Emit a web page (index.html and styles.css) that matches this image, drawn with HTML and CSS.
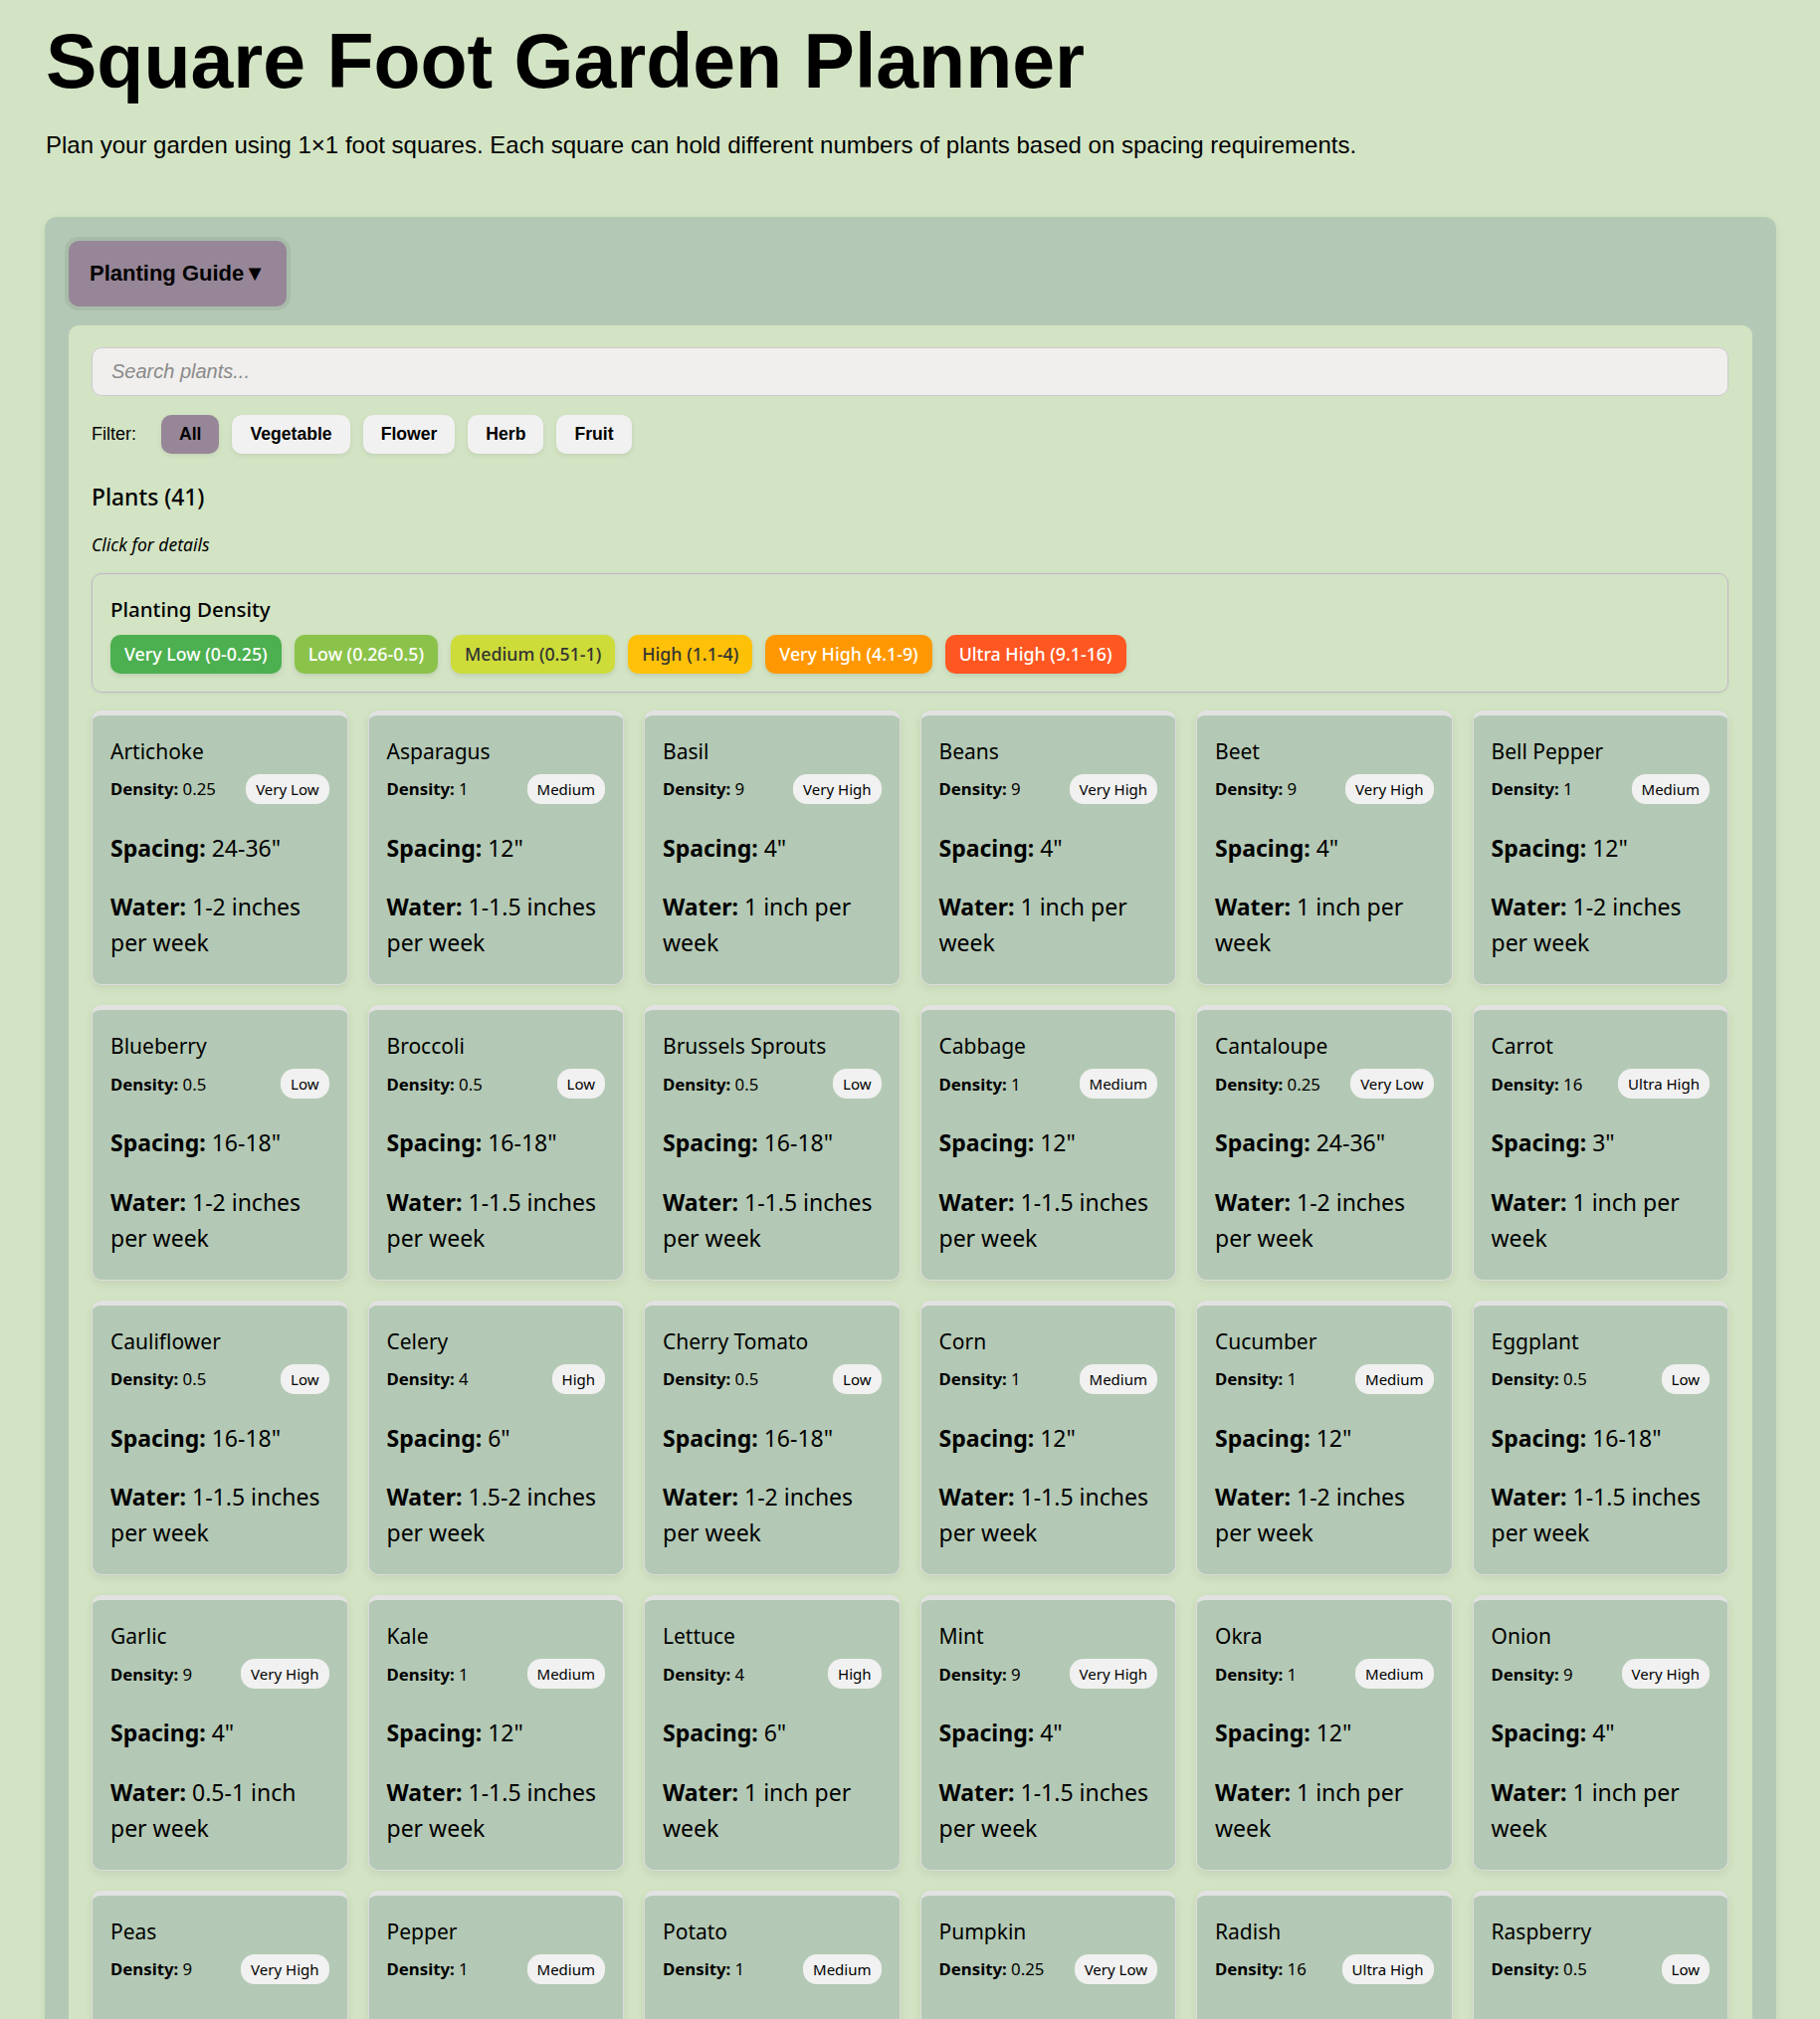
FILE: index.html
```html
<!DOCTYPE html>
<html lang="en">
<head>
<meta charset="utf-8">
<title>Square Foot Garden Planner</title>
<link rel="stylesheet" href="styles.css">
</head>
<body>
<h1 class="title">Square Foot Garden Planner</h1>
<p class="subtitle">Plan your garden using 1×1 foot squares. Each square can hold different numbers of plants based on spacing requirements.</p>

<section class="guide">
  <button class="guide-toggle">Planting Guide▼</button>
  <div class="guide-panel">
    <input class="search" type="text" placeholder="Search plants...">
    <div class="filters">
      <span class="filter-label">Filter:</span>
      <button class="filter active">All</button>
      <button class="filter">Vegetable</button>
      <button class="filter">Flower</button>
      <button class="filter">Herb</button>
      <button class="filter">Fruit</button>
    </div>
    <h3 class="plants-title">Plants (41)</h3>
    <p class="hint">Click for details</p>

    <div class="legend">
      <h4 class="legend-title">Planting Density</h4>
      <div class="legend-items">
        <span class="lvl lvl-vlow">Very Low (0-0.25)</span>
        <span class="lvl lvl-low">Low (0.26-0.5)</span>
        <span class="lvl lvl-med">Medium (0.51-1)</span>
        <span class="lvl lvl-high">High (1.1-4)</span>
        <span class="lvl lvl-vhigh">Very High (4.1-9)</span>
        <span class="lvl lvl-ultra">Ultra High (9.1-16)</span>
      </div>
    </div>

    <div class="grid">
      <div class="card"><h4 class="name">Artichoke</h4><div class="dens"><span><b>Density:</b> 0.25</span><span class="tag">Very Low</span></div><p class="row"><b>Spacing:</b> 24-36"</p><p class="row"><b>Water:</b> 1-2 inches per week</p></div>
      <div class="card"><h4 class="name">Asparagus</h4><div class="dens"><span><b>Density:</b> 1</span><span class="tag">Medium</span></div><p class="row"><b>Spacing:</b> 12"</p><p class="row"><b>Water:</b> 1-1.5 inches per week</p></div>
      <div class="card"><h4 class="name">Basil</h4><div class="dens"><span><b>Density:</b> 9</span><span class="tag">Very High</span></div><p class="row"><b>Spacing:</b> 4"</p><p class="row"><b>Water:</b> 1 inch per week</p></div>
      <div class="card"><h4 class="name">Beans</h4><div class="dens"><span><b>Density:</b> 9</span><span class="tag">Very High</span></div><p class="row"><b>Spacing:</b> 4"</p><p class="row"><b>Water:</b> 1 inch per week</p></div>
      <div class="card"><h4 class="name">Beet</h4><div class="dens"><span><b>Density:</b> 9</span><span class="tag">Very High</span></div><p class="row"><b>Spacing:</b> 4"</p><p class="row"><b>Water:</b> 1 inch per week</p></div>
      <div class="card"><h4 class="name">Bell Pepper</h4><div class="dens"><span><b>Density:</b> 1</span><span class="tag">Medium</span></div><p class="row"><b>Spacing:</b> 12"</p><p class="row"><b>Water:</b> 1-2 inches per week</p></div>

      <div class="card"><h4 class="name">Blueberry</h4><div class="dens"><span><b>Density:</b> 0.5</span><span class="tag">Low</span></div><p class="row"><b>Spacing:</b> 16-18"</p><p class="row"><b>Water:</b> 1-2 inches per week</p></div>
      <div class="card"><h4 class="name">Broccoli</h4><div class="dens"><span><b>Density:</b> 0.5</span><span class="tag">Low</span></div><p class="row"><b>Spacing:</b> 16-18"</p><p class="row"><b>Water:</b> 1-1.5 inches per week</p></div>
      <div class="card"><h4 class="name">Brussels Sprouts</h4><div class="dens"><span><b>Density:</b> 0.5</span><span class="tag">Low</span></div><p class="row"><b>Spacing:</b> 16-18"</p><p class="row"><b>Water:</b> 1-1.5 inches per week</p></div>
      <div class="card"><h4 class="name">Cabbage</h4><div class="dens"><span><b>Density:</b> 1</span><span class="tag">Medium</span></div><p class="row"><b>Spacing:</b> 12"</p><p class="row"><b>Water:</b> 1-1.5 inches per week</p></div>
      <div class="card"><h4 class="name">Cantaloupe</h4><div class="dens"><span><b>Density:</b> 0.25</span><span class="tag">Very Low</span></div><p class="row"><b>Spacing:</b> 24-36"</p><p class="row"><b>Water:</b> 1-2 inches per week</p></div>
      <div class="card"><h4 class="name">Carrot</h4><div class="dens"><span><b>Density:</b> 16</span><span class="tag">Ultra High</span></div><p class="row"><b>Spacing:</b> 3"</p><p class="row"><b>Water:</b> 1 inch per week</p></div>

      <div class="card"><h4 class="name">Cauliflower</h4><div class="dens"><span><b>Density:</b> 0.5</span><span class="tag">Low</span></div><p class="row"><b>Spacing:</b> 16-18"</p><p class="row"><b>Water:</b> 1-1.5 inches per week</p></div>
      <div class="card"><h4 class="name">Celery</h4><div class="dens"><span><b>Density:</b> 4</span><span class="tag">High</span></div><p class="row"><b>Spacing:</b> 6"</p><p class="row"><b>Water:</b> 1.5-2 inches per week</p></div>
      <div class="card"><h4 class="name">Cherry Tomato</h4><div class="dens"><span><b>Density:</b> 0.5</span><span class="tag">Low</span></div><p class="row"><b>Spacing:</b> 16-18"</p><p class="row"><b>Water:</b> 1-2 inches per week</p></div>
      <div class="card"><h4 class="name">Corn</h4><div class="dens"><span><b>Density:</b> 1</span><span class="tag">Medium</span></div><p class="row"><b>Spacing:</b> 12"</p><p class="row"><b>Water:</b> 1-1.5 inches per week</p></div>
      <div class="card"><h4 class="name">Cucumber</h4><div class="dens"><span><b>Density:</b> 1</span><span class="tag">Medium</span></div><p class="row"><b>Spacing:</b> 12"</p><p class="row"><b>Water:</b> 1-2 inches per week</p></div>
      <div class="card"><h4 class="name">Eggplant</h4><div class="dens"><span><b>Density:</b> 0.5</span><span class="tag">Low</span></div><p class="row"><b>Spacing:</b> 16-18"</p><p class="row"><b>Water:</b> 1-1.5 inches per week</p></div>

      <div class="card"><h4 class="name">Garlic</h4><div class="dens"><span><b>Density:</b> 9</span><span class="tag">Very High</span></div><p class="row"><b>Spacing:</b> 4"</p><p class="row"><b>Water:</b> 0.5-1 inch per week</p></div>
      <div class="card"><h4 class="name">Kale</h4><div class="dens"><span><b>Density:</b> 1</span><span class="tag">Medium</span></div><p class="row"><b>Spacing:</b> 12"</p><p class="row"><b>Water:</b> 1-1.5 inches per week</p></div>
      <div class="card"><h4 class="name">Lettuce</h4><div class="dens"><span><b>Density:</b> 4</span><span class="tag">High</span></div><p class="row"><b>Spacing:</b> 6"</p><p class="row"><b>Water:</b> 1 inch per week</p></div>
      <div class="card"><h4 class="name">Mint</h4><div class="dens"><span><b>Density:</b> 9</span><span class="tag">Very High</span></div><p class="row"><b>Spacing:</b> 4"</p><p class="row"><b>Water:</b> 1-1.5 inches per week</p></div>
      <div class="card"><h4 class="name">Okra</h4><div class="dens"><span><b>Density:</b> 1</span><span class="tag">Medium</span></div><p class="row"><b>Spacing:</b> 12"</p><p class="row"><b>Water:</b> 1 inch per week</p></div>
      <div class="card"><h4 class="name">Onion</h4><div class="dens"><span><b>Density:</b> 9</span><span class="tag">Very High</span></div><p class="row"><b>Spacing:</b> 4"</p><p class="row"><b>Water:</b> 1 inch per week</p></div>

      <div class="card"><h4 class="name">Peas</h4><div class="dens"><span><b>Density:</b> 9</span><span class="tag">Very High</span></div><p class="row"><b>Spacing:</b> 4"</p><p class="row"><b>Water:</b> 1 inch per week</p></div>
      <div class="card"><h4 class="name">Pepper</h4><div class="dens"><span><b>Density:</b> 1</span><span class="tag">Medium</span></div><p class="row"><b>Spacing:</b> 12"</p><p class="row"><b>Water:</b> 1-2 inches per week</p></div>
      <div class="card"><h4 class="name">Potato</h4><div class="dens"><span><b>Density:</b> 1</span><span class="tag">Medium</span></div><p class="row"><b>Spacing:</b> 12"</p><p class="row"><b>Water:</b> 1-2 inches per week</p></div>
      <div class="card"><h4 class="name">Pumpkin</h4><div class="dens"><span><b>Density:</b> 0.25</span><span class="tag">Very Low</span></div><p class="row"><b>Spacing:</b> 24-36"</p><p class="row"><b>Water:</b> 1-2 inches per week</p></div>
      <div class="card"><h4 class="name">Radish</h4><div class="dens"><span><b>Density:</b> 16</span><span class="tag">Ultra High</span></div><p class="row"><b>Spacing:</b> 3"</p><p class="row"><b>Water:</b> 1 inch per week</p></div>
      <div class="card"><h4 class="name">Raspberry</h4><div class="dens"><span><b>Density:</b> 0.5</span><span class="tag">Low</span></div><p class="row"><b>Spacing:</b> 16-18"</p><p class="row"><b>Water:</b> 1-2 inches per week</p></div>
    </div>
  </div>
</section>
</body>
</html>
```

FILE: styles.css
```css
html, body {
  background: #d3e4c4;
}
body {
  margin: 0;
  padding: 0 44px 40px 45px;
  font-family: "Liberation Sans", Arial, sans-serif;
  color: #000;
}
.title {
  font-size: 77px;
  font-weight: bold;
  line-height: 1.15;
  margin: 17px 0 26px 1px;
}
.subtitle {
  font-size: 24px;
  line-height: 28px;
  margin: 0 0 58px 1px;
}
.guide {
  background: #b4c9b5;
  border-radius: 12px;
  padding: 24px;
  box-shadow: 0 2px 10px rgba(0,0,0,0.06);
}
.guide-toggle {
  display: block;
  height: 66px;
  padding: 0 21px;
  background: #978698;
  border: none;
  border-radius: 10px;
  box-shadow: 0 0 0 4px #a8bca9;
  font-family: "Liberation Sans", Arial, sans-serif;
  font-weight: bold;
  font-size: 22px;
  color: #000;
  margin-bottom: 19px;
}
.guide-panel {
  background: #d3e4c4;
  border-radius: 10px;
  padding: 22px 24px 24px 23px;
  font-family: "Noto Sans", "Open Sans", sans-serif;
}
.search {
  display: block;
  box-sizing: border-box;
  width: 100%;
  height: 49px;
  padding: 0 19px;
  background: #f0efed;
  border: 1px solid #cfc9cf;
  border-radius: 10px;
  font-family: "Liberation Sans", Arial, sans-serif;
  font-size: 20px;
}
.search::placeholder {
  color: #8a8a8a;
  font-style: italic;
}
.filters {
  display: flex;
  align-items: center;
  gap: 13px;
  margin-top: 19px;
  font-family: "Liberation Sans", Arial, sans-serif;
}
.filter-label {
  font-size: 18px;
  margin-right: 12px;
}
.filter {
  height: 39px;
  padding: 0 18px;
  border: none;
  border-radius: 10px;
  background: #f1f1f1;
  font-family: "Liberation Sans", Arial, sans-serif;
  font-weight: bold;
  font-size: 17.6px;
  color: #000;
  box-shadow: 0 2px 5px rgba(0,0,0,0.08);
}
.filter.active {
  background: #978698;
}
.plants-title {
  font-size: 22.8px;
  font-weight: 500;
  margin: 28px 0 0;
  line-height: 32px;
}
.hint {
  font-style: italic;
  font-size: 17.5px;
  line-height: 24px;
  margin: 19px 0 0;
}
.legend {
  margin-top: 17px;
  border: 1px solid #c3b6c8;
  border-radius: 10px;
  padding: 21px 18px 18px;
  box-shadow: 0 1px 4px rgba(0,0,0,0.05);
}
.legend-title {
  font-size: 20.5px;
  font-weight: 500;
  margin: 0 0 11px;
  line-height: 29px;
}
.legend-items {
  display: flex;
  gap: 13px;
  flex-wrap: wrap;
}
.lvl {
  height: 39px;
  line-height: 39px;
  padding: 0 14px;
  border-radius: 10px;
  font-size: 17.8px;
  font-weight: 500;
  color: #fff;
  box-shadow: 0 2px 5px rgba(0,0,0,0.1);
}
.lvl-vlow { background: #4caf50; }
.lvl-low { background: #8bc34a; }
.lvl-med { background: #cddc39; color: #333; }
.lvl-high { background: #ffc107; color: #333; }
.lvl-vhigh { background: #ff9800; }
.lvl-ultra { background: #ff5722; }
.grid {
  display: grid;
  grid-template-columns: repeat(6, 1fr);
  gap: 20px;
  margin-top: 18px;
}
.card {
  background: #b4c9b5;
  border: 1px solid #dcdcdc;
  border-top: 5px solid #e2e2e2;
  border-radius: 10px;
  padding: 18px 18px 24px;
  box-shadow: 0 3px 10px rgba(0,0,0,0.08);
}
.name {
  font-size: 21px;
  font-weight: normal;
  margin: 0;
  line-height: 36px;
}
.dens {
  display: flex;
  justify-content: space-between;
  align-items: center;
  margin-top: 5px;
  font-size: 16.8px;
}
.tag {
  background: #f1f1f1;
  border-radius: 14px;
  padding: 0 10px;
  height: 30px;
  line-height: 30px;
  font-size: 15px;
}
.row {
  font-size: 23px;
  line-height: 36px;
  margin: 26px 0 0;
}
.row + .row {
  margin-top: 23.5px;
}
```
